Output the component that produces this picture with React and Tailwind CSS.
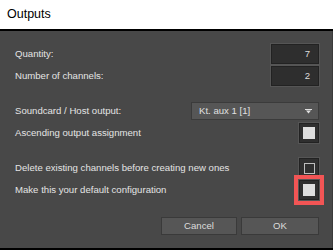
const font = { fontFamily: '"Liberation Sans", Arial, sans-serif' };

const NumberBox = ({ value }) => (
  <div className="w-[48px] h-[20px] bg-[#2e2e2e] border border-[#222] outline outline-1 outline-[#555] flex items-center justify-end pr-[8px] text-[#dcdcdc]">
    {value}
  </div>
);

const Checkbox = ({ checked }) => (
  <div className="w-[20px] h-[20px] bg-[#2f2f2f] border border-[#222] outline outline-1 outline-[#555] flex items-center justify-center">
    {checked ? (
      <div className="w-[12px] h-[12px] bg-[#dedede]" />
    ) : (
      <div className="w-[11px] h-[11px] border border-[#bdbdbd]" />
    )}
  </div>
);

const Row = ({ label, children, className = '' }) => (
  <div className={`flex items-center justify-between ${className}`}>
    <span>{label}</span>
    {children}
  </div>
);

export default function App() {
  return (
    <div className="w-[333px] h-[250px] flex flex-col overflow-hidden" style={font}>
      {/* Title bar */}
      <div className="h-[29px] bg-white flex items-center pl-[7px] text-[12.5px] text-black">
        Outputs
      </div>
      <div className="h-[2px] bg-black" />

      {/* Body */}
      <div className="flex-1 bg-[#484848] border-r border-[#3a3a3a] flex flex-col pl-[15px] pr-[13px] text-[9.6px] text-[#e4e4e4]">
        <Row label="Quantity:" className="mt-[13px]">
          <NumberBox value="7" />
        </Row>
        <Row label="Number of channels:" className="mt-[2px]">
          <NumberBox value="2" />
        </Row>

        <Row label="Soundcard / Host output:" className="mt-[16px]">
          <div className="w-[128px] h-[18px] bg-[#565656] border border-[#3b3b3b] flex items-center justify-between pl-[7px] pr-[6px] text-[#e0e0e0]">
            <span>Kt. aux 1 [1]</span>
            <svg width="7" height="5" viewBox="0 0 7 5">
              <rect x="0" y="0" width="7" height="1" fill="#e0e0e0" />
              <path d="M1 1.5 H6 L3.5 4.5 Z" fill="#e0e0e0" />
            </svg>
          </div>
        </Row>
        <Row label="Ascending output assignment" className="mt-[3px]">
          <Checkbox checked />
        </Row>

        <Row label="Delete existing channels before creating new ones" className="mt-[15px]">
          <Checkbox />
        </Row>
        <Row label="Make this your default configuration" className="mt-[2px]">
          <div className="relative">
            <Checkbox checked />
            <div className="absolute -inset-[5px] border-[4px] border-[#f25555]" />
          </div>
        </Row>

        <div className="flex justify-end gap-[4px] mt-[17px]">
          <button className="w-[76px] h-[18px] bg-[#565656] border border-[#3a3a3a] text-[#dcdcdc]">
            Cancel
          </button>
          <button className="w-[78px] h-[18px] bg-[#565656] border border-[#3a3a3a] text-[#dcdcdc]">
            OK
          </button>
        </div>
      </div>
      <div className="h-[2px] bg-black" />
    </div>
  );
}
